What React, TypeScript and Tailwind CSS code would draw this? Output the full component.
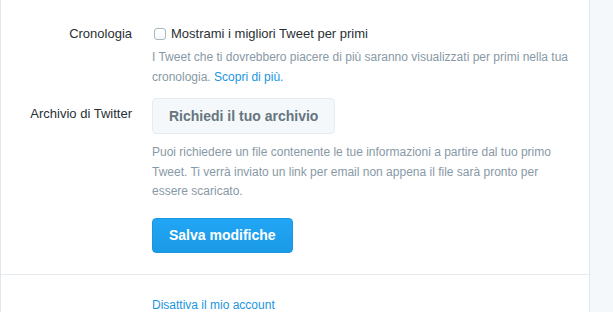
import React from 'react';

function Label({ children, top = 0 }: { children: React.ReactNode; top?: number }) {
  return (
    <div
      className={`w-[131px] shrink-0 text-right text-[13px] leading-[18px] text-[#292f33] ${top ? 'pt-[7px]' : ''}`}
    >
      {children}
    </div>
  );
}

export default function App() {
  return (
    <div className="flex h-[312px] w-[613px] overflow-hidden bg-[#f5f8fa] font-['Liberation_Sans',Arial,sans-serif]">
      <div className="w-[590px] shrink-0 border-x border-[#e1e8ed] bg-white">
        <div className="pt-[25px]">
          {/* Cronologia */}
          <div className="flex gap-5">
            <Label>Cronologia</Label>
            <div className="w-[422px]">
              <label className="flex h-[18px] items-center text-[13px] text-[#292f33]">
                <span className="ml-0.5 mr-[5px] h-[12px] w-[12px] rounded-[3px] border border-[#aab8c2] bg-gradient-to-b from-white to-[#f5f8fa]" />
                Mostrami i migliori Tweet per primi
              </label>
              <p className="mt-[5px] text-[12px] leading-[19.5px] text-[#8899a6]">
                I Tweet che ti dovrebbero piacere di più saranno visualizzati per primi nella tua
                cronologia. <span className="text-[#1b95e0]">Scopri di più.</span>
              </p>
            </div>
          </div>

          {/* Archivio */}
          <div className="mt-[11px] flex gap-5">
            <Label top={7}>Archivio di Twitter</Label>
            <div className="w-[422px]">
              <button
                type="button"
                className="h-9 rounded-[4px] border border-[#e6ecf0] bg-[#f5f8fa] px-4 text-[14px] font-bold text-[#66757f]"
              >
                Richiedi il tuo archivio
              </button>
              <p className="mt-[9px] text-[12px] leading-[19.5px] text-[#8899a6]">
                Puoi richiedere un file contenente le tue informazioni a partire dal tuo primo
                Tweet. Ti verrà inviato un link per email non appena il file sarà pronto per
                essere scaricato.
              </p>
              <button
                type="button"
                className="mt-4 h-[35px] rounded-[4px] border border-[#1a96e0] bg-gradient-to-b from-[#21a6f5] to-[#1b9ae6] px-4 text-[14px] font-bold text-white"
              >
                Salva modifiche
              </button>
            </div>
          </div>
        </div>

        <div className="mt-[21px] h-px bg-[#e6ecf0]" />

        <div className="pl-[151px] pt-[22px] text-[12px] leading-4">
          <a className="text-[#1b95e0]">Disattiva il mio account</a>
        </div>
      </div>
    </div>
  );
}
